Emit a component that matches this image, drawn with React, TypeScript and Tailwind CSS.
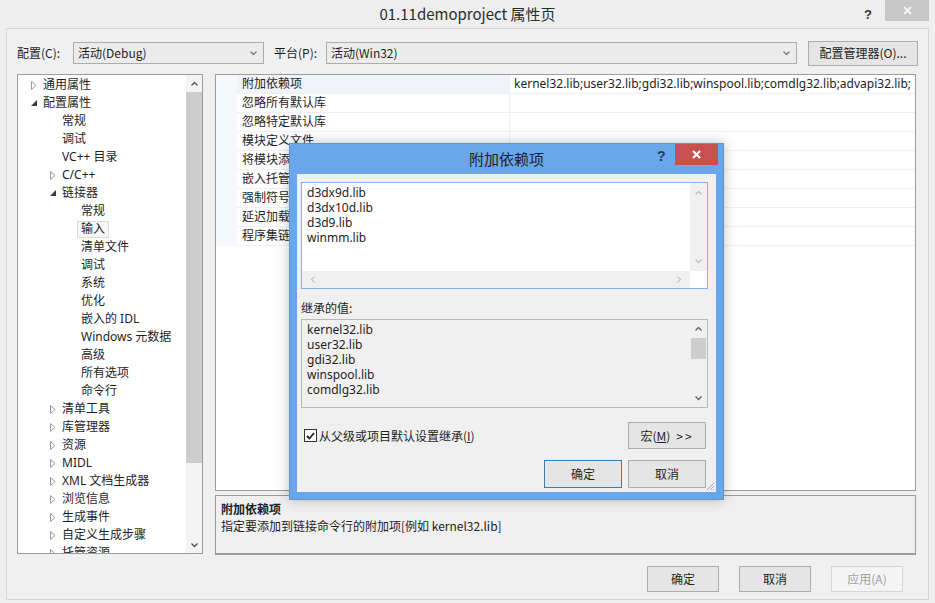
import React from 'react'

const ui = "font-['Noto_Sans','Noto_Sans_CJK_SC',sans-serif]"
const yh = "font-['Noto_Sans_CJK_SC',sans-serif]"

type Dir = 'up' | 'down' | 'left' | 'right'

function Chev({ dir, color = '#606060' }: { dir: Dir; color?: string }) {
  const pts: Record<Dir, string> = {
    up: '0.5,4.5 3.5,1.5 6.5,4.5',
    down: '0.5,1.5 3.5,4.5 6.5,1.5',
    left: '4.5,0.5 1.5,3.5 4.5,6.5',
    right: '1.5,0.5 4.5,3.5 1.5,6.5',
  }
  const vertical = dir === 'up' || dir === 'down'
  return (
    <svg width={vertical ? 7 : 6} height={vertical ? 6 : 7} viewBox={vertical ? '0 0 7 6' : '0 0 6 7'}>
      <polyline points={pts[dir]} fill="none" stroke={color} strokeWidth="1.3" />
    </svg>
  )
}

function Arrow({ kind }: { kind?: 'c' | 'o' }) {
  if (kind === 'c')
    return (
      <svg width="6" height="9" viewBox="0 0 6 9">
        <polygon points="0.5,0.5 5,4.5 0.5,8.5" fill="none" stroke="#9a9a9a" strokeWidth="1" />
      </svg>
    )
  if (kind === 'o')
    return (
      <svg width="6" height="6" viewBox="0 0 6 6">
        <polygon points="6,0 6,6 0,6" fill="#3c3c3c" />
      </svg>
    )
  return null
}

const tree: [string, number, ('c' | 'o')?, boolean?][] = [
  ['通用属性', 0, 'c'],
  ['配置属性', 0, 'o'],
  ['常规', 1],
  ['调试', 1],
  ['VC++ 目录', 1],
  ['C/C++', 1, 'c'],
  ['链接器', 1, 'o'],
  ['常规', 2],
  ['输入', 2, undefined, true],
  ['清单文件', 2],
  ['调试', 2],
  ['系统', 2],
  ['优化', 2],
  ['嵌入的 IDL', 2],
  ['Windows 元数据', 2],
  ['高级', 2],
  ['所有选项', 2],
  ['命令行', 2],
  ['清单工具', 1, 'c'],
  ['库管理器', 1, 'c'],
  ['资源', 1, 'c'],
  ['MIDL', 1, 'c'],
  ['XML 文档生成器', 1, 'c'],
  ['浏览信息', 1, 'c'],
  ['生成事件', 1, 'c'],
  ['自定义生成步骤', 1, 'c'],
  ['托管资源', 1, 'c'],
]

const indent = ['pl-[13px]', 'pl-[32px]', 'pl-[51px]']

const props = [
  '附加依赖项',
  '忽略所有默认库',
  '忽略特定默认库',
  '模块定义文件',
  '将模块添加到程序集',
  '嵌入托管资源文件',
  '强制符号引用',
  '延迟加载的 DLL',
  '程序集链接资源',
]

function Button({ children, className = '', disabled = false, isDefault = false }: { children: React.ReactNode; className?: string; disabled?: boolean; isDefault?: boolean }) {
  return (
    <div
      className={
        'flex items-center justify-center border text-[12px] shrink-0 ' +
        (disabled
          ? 'bg-[#f4f4f4] border-[#d5d5d5] text-[#a0a0a0] '
          : isDefault
            ? 'bg-[#e5e5e5] border-[#3c7fb1] text-[#1e1e1e] '
            : 'bg-[#e5e5e5] border-[#acacac] text-[#1e1e1e] ') +
        className
      }
    >
      {children}
    </div>
  )
}

function Combo({ text, className }: { text: string; className: string }) {
  return (
    <div className={'h-[22px] shrink-0 flex items-center justify-between border border-[#acacac] bg-[#ececec] pl-[4px] pr-[6px] text-[12px] text-[#1e1e1e] ' + className}>
      <span>{text}</span>
      <Chev dir="down" color="#7a7a7a" />
    </div>
  )
}

function Dialog() {
  return (
    <div className={'absolute left-[289px] top-[143px] w-[435px] h-[357px] bg-[#6aa6ea] border border-[#5a95d6] flex flex-col shadow-[0_0_12px_rgba(0,0,0,0.25)] ' + ui}>
      <div className="h-[30px] flex shrink-0">
        <div className="w-[66px]" />
        <div className={'flex-1 flex items-center justify-center text-[15px] text-[#1e1e1e] ' + yh}>附加依赖项</div>
        <div className="w-[66px] flex items-start justify-end pr-[5px]">
          <span className="text-[14px] font-bold text-[#2a3a55] mt-[5px] mr-[9px] leading-none font-['Liberation_Sans',sans-serif]">?</span>
          <div className="w-[45px] h-[21px] bg-[#c75050] flex items-center justify-center">
            <svg width="9" height="9" viewBox="0 0 9 9">
              <path d="M1 1 L8 8 M8 1 L1 8" stroke="#fff" strokeWidth="2" />
            </svg>
          </div>
        </div>
      </div>
      <div className="relative flex-1 mx-[7px] mb-[7px] bg-[#f0f0f0] pl-[4px] pr-[8px] pt-[8px] flex flex-col">
        <div className="h-[107px] border border-[#7eb4ea] bg-white flex flex-col">
          <div className="flex-1 flex">
            <div className="flex-1 pl-[5px] pt-[2px] text-[12px] leading-[15px] text-[#1e1e1e]">
              <div>d3dx9d.lib</div>
              <div>d3dx10d.lib</div>
              <div>d3d9.lib</div>
              <div>winmm.lib</div>
            </div>
            <div className="w-[17px] bg-[#f0f0f0] flex flex-col items-center justify-between py-[7px]">
              <Chev dir="up" color="#c2c2c2" />
              <Chev dir="down" color="#c2c2c2" />
            </div>
          </div>
          <div className="h-[17px] flex">
            <div className="flex-1 bg-[#f0f0f0] flex items-center justify-between px-[8px]">
              <Chev dir="left" color="#c2c2c2" />
              <Chev dir="right" color="#c2c2c2" />
            </div>
            <div className="w-[17px] bg-white" />
          </div>
        </div>
        <div className={'mt-[11px] text-[12px] leading-[16px] text-[#1e1e1e] ' + yh}>继承的值:</div>
        <div className="mt-[3px] h-[89px] border border-[#b8b8b8] bg-[#f0f0f0] flex">
          <div className="flex-1 pl-[5px] pt-[2px] text-[12px] leading-[15px] text-[#1e1e1e] overflow-hidden">
            <div>kernel32.lib</div>
            <div>user32.lib</div>
            <div>gdi32.lib</div>
            <div>winspool.lib</div>
            <div>comdlg32.lib</div>
          </div>
          <div className="w-[16px] mr-[1px] flex flex-col items-center">
            <div className="h-[18px] flex items-center">
              <Chev dir="up" color="#606060" />
            </div>
            <div className="w-[15px] h-[21px] bg-[#cdcdcd]" />
            <div className="flex-1" />
            <div className="h-[18px] flex items-center">
              <Chev dir="down" color="#606060" />
            </div>
          </div>
        </div>
        <div className="mt-[14px] flex items-center justify-between pr-[2px]">
          <div className={'flex items-center text-[12px] text-[#1e1e1e] ' + yh}>
            <div className="ml-[3px] w-[13px] h-[13px] border border-[#333] bg-white flex items-center justify-center">
              <svg width="9" height="8" viewBox="0 0 9 8">
                <polyline points="1,4 3.5,6.5 8,1" fill="none" stroke="#222" strokeWidth="1.8" />
              </svg>
            </div>
            <span className="ml-[2px]">
              从父级或项目默认设置继承(<span className="underline">I</span>)
            </span>
          </div>
          <Button className={'w-[78px] h-[27px] ' + yh}>
            <span>宏(<span className="underline">M</span>)</span>
            <span className="ml-[6px] tracking-[2px]">&gt;&gt;</span>
          </Button>
        </div>
        <div className="mt-[11px] flex justify-end gap-[6px] pr-[2px]">
          <Button isDefault className={'w-[78px] h-[28px] ' + yh}>确定</Button>
          <Button className={'w-[78px] h-[28px] ' + yh}>取消</Button>
        </div>
        <svg className="absolute right-[1px] bottom-[1px]" width="10" height="10" viewBox="0 0 10 10">
          <path d="M9 2 L2 9 M9 5 L5 9 M9 8 L8 9" stroke="#a8a8a8" strokeWidth="1" />
        </svg>
      </div>
    </div>
  )
}

export default function App() {
  return (
    <div className={'relative w-[935px] h-[603px] bg-[#eeeeee] flex flex-col overflow-hidden ' + ui}>
      <div className="h-[28px] flex shrink-0">
        <div className="w-[80px]" />
        <div className={'flex-1 flex items-center justify-center text-[15px] text-[#2b2b2b] ' + yh}>01.11demoproject 属性页</div>
        <div className="w-[80px] flex items-start justify-end pr-[6px]">
          <span className="mt-[5px] mr-[13px] text-[13px] font-bold text-[#333] font-['Liberation_Sans',sans-serif]">?</span>
          <div className="w-[44px] h-[21px] bg-[#c7c7c7] flex items-center justify-center">
            <svg width="9" height="9" viewBox="0 0 9 9">
              <path d="M1 1 L8 8 M8 1 L1 8" stroke="#fff" strokeWidth="1.6" />
            </svg>
          </div>
        </div>
      </div>

      <div className="flex-1 mx-[6px] mb-[3px] border border-[#d6d6d6] bg-[#f0f0f0] flex flex-col">
        <div className="mt-[12px] h-[24px] flex items-center pl-[10px] pr-[12px]">
          <span className={'text-[12px] text-[#1e1e1e] w-[56px] shrink-0 ' + yh}>配置(C):</span>
          <Combo text="活动(Debug)" className={'w-[191px] ' + yh} />
          <span className={'ml-[10px] text-[12px] text-[#1e1e1e] w-[52px] shrink-0 ' + yh}>平台(P):</span>
          <Combo text="活动(Win32)" className={'w-[471px] ' + yh} />
          <Button className={'ml-[11px] w-[110px] h-[25px] ' + yh}>配置管理器(O)...</Button>
        </div>

        <div className="mt-[9px] flex pl-[10px] pr-[12px]">
          {/* tree */}
          <div className="w-[186px] shrink-0 h-[480px] border border-[#9c9c9c] bg-white flex">
            <div className="flex-1 min-w-0 pt-[1px] overflow-hidden">
              {tree.map(([label, level, arrow, sel], i) => (
                <div key={i} className={'h-[18px] flex items-center text-[12px] text-[#1e1e1e] whitespace-nowrap ' + indent[level]}>
                  <div className="w-[12px] shrink-0 flex items-center">
                    <Arrow kind={arrow} />
                  </div>
                  {sel ? (
                    <span className="-ml-[4px] px-[3px] h-[17px] flex items-center border border-[#dadada] bg-[#f7f7f7]">{label}</span>
                  ) : (
                    <span>{label}</span>
                  )}
                </div>
              ))}
            </div>
            <div className="w-[16px] shrink-0 bg-[#f4f4f4] flex flex-col items-center">
              <div className="h-[17px] flex items-center">
                <Chev dir="up" color="#505050" />
              </div>
              <div className="w-[16px] h-[371px] bg-[#cdcdcd]" />
              <div className="flex-1" />
              <div className="h-[17px] flex items-center">
                <Chev dir="down" color="#505050" />
              </div>
            </div>
          </div>

          {/* right column */}
          <div className="ml-[12px] flex-1 min-w-0 flex flex-col">
            <div className="h-[417px] border border-[#9c9c9c] bg-white flex flex-col overflow-hidden">
              {props.map((p, i) => (
                <div key={i} className="h-[19px] flex">
                  <div className="w-[21px] shrink-0 bg-[#f6f8fc]" />
                  <div className={'w-[273px] shrink-0 flex items-center pl-[5px] border-b border-r border-[#f0f0f0] text-[12px] text-[#1e1e1e] ' + (i === 0 ? 'bg-[#f0f3f8]' : 'bg-white')}>{p}</div>
                  <div className="flex-1 min-w-0 flex items-center pl-[4px] border-b border-[#f0f0f0] text-[12px] text-[#1e1e1e] whitespace-nowrap overflow-hidden">
                    {i === 0 ? 'kernel32.lib;user32.lib;gdi32.lib;winspool.lib;comdlg32.lib;advapi32.lib;' : ''}
                  </div>
                </div>
              ))}
            </div>
            <div className={'mt-[4px] h-[60px] border border-[#9c9c9c] border-b-2 bg-[#f0f0f0] pl-[5px] pt-[4px] text-[12px] text-[#1e1e1e] leading-[17px] ' + yh}>
              <div className="font-bold">附加依赖项</div>
              <div>指定要添加到链接命令行的附加项[例如 kernel32.lib]</div>
            </div>
          </div>
        </div>

        <div className="mt-[11px] flex justify-end gap-[20px] pr-[25px]">
          <Button className={'w-[72px] h-[26px] ' + yh}>确定</Button>
          <Button className={'w-[72px] h-[26px] ' + yh}>取消</Button>
          <Button disabled className={'w-[72px] h-[26px] ' + yh}>应用(A)</Button>
        </div>
      </div>

      <Dialog />
    </div>
  )
}
